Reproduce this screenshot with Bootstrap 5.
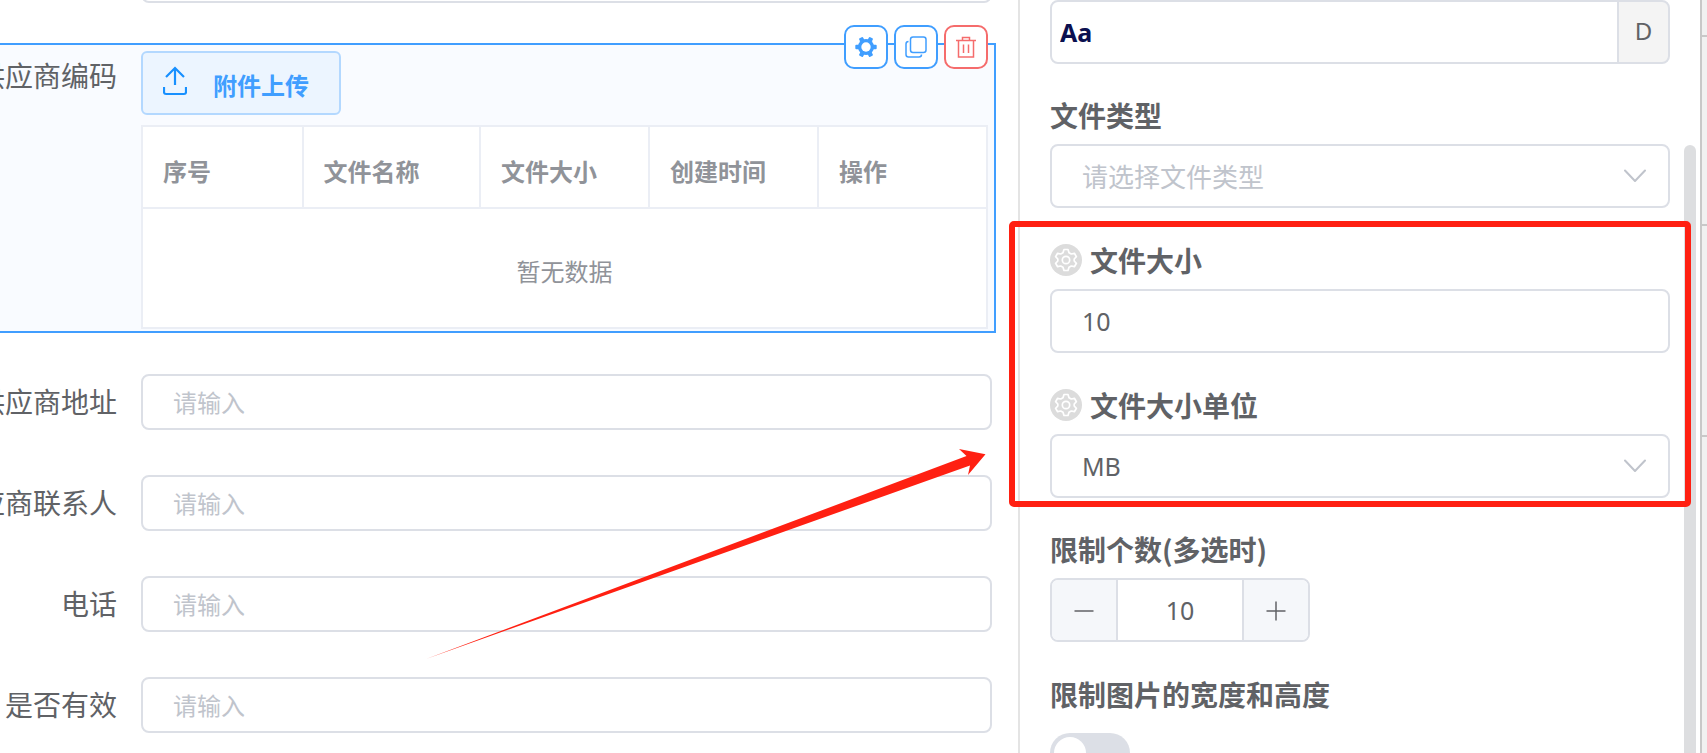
<!DOCTYPE html>
<html lang="zh-CN">
<head>
<meta charset="utf-8">
<meta name="viewport" content="width=device-width, initial-scale=1">
<title>表单设计器</title>
<link href="https://cdn.jsdelivr.net/npm/bootstrap@5.3.0/dist/css/bootstrap.min.css" rel="stylesheet">
<style>
  :root { --line: #dcdfe6; --ink: #606266; --hint: #c0c4cc; --blue: #409eff; --red: #f56c6c; --mark-red: #ff2012; }
  body { font-family: "Noto Sans CJK SC", sans-serif; color: var(--ink); background: #fff; }

  /* form canvas */
  .canvas { min-width: 0; padding-right: 22px; }
  .form-rows { margin-top: -53px; }
  .form-line { padding-right: 4px; margin-bottom: 45px; }
  .form-line.before-selected { margin-bottom: 40px; }
  .form-line.selected { margin-bottom: 41px; padding: 6px 6px 2px 0; border: 2px solid var(--blue); border-left: 0; background: #f9fbff; }
  .line-label { flex: 0 0 117px; min-width: 0; margin-right: 24px; height: 56px; padding-bottom: 2px; font-size: 28px; white-space: nowrap; }
  .selected .line-label { height: 50px; }
  .box { height: 64px; padding: 0 30px; border: 2px solid var(--line); border-radius: 8px; color: var(--ink); background-color: #fff; font-size: 25px; font-family: "Noto Sans", "Noto Sans CJK SC", sans-serif; }
  .line-box { height: 56px; padding-bottom: 2px; font-size: 24px; font-family: "Noto Sans CJK SC", sans-serif; }
  .box::placeholder { color: var(--hint); }

  .upload-btn { height: 64px; padding: 0 30px 0 20px; gap: 26px; border: 2px solid #b3d8ff; border-radius: 6px; background: #ecf5ff; color: var(--blue); font-size: 24px; font-weight: 700; margin-bottom: 10px; }
  .upload-btn svg { box-sizing: content-box; padding-bottom: 4px; }
  .file-table { --bs-table-bg: #fff; border-color: #ebeef5; table-layout: fixed; font-size: 24px; }
  .file-table > :not(caption) > * > * { border: 2px solid #ebeef5; color: #909399; vertical-align: middle; padding: 8px 20px 0; }
  .file-table thead tr { height: 82px; }
  .file-table tbody tr { height: 120px; }
  .file-table > tbody > tr > td { padding-top: 6px; }

  .line-tools { top: -20px; right: 6px; gap: 6px; }
  .tool-btn { width: 44px; height: 44px; padding: 0; border: 2px solid var(--blue); border-radius: 10px; background: #fff; color: var(--blue); }
  .tool-btn.danger { border-color: var(--red); color: var(--red); }
  .arrow-mark { left: 420px; top: 440px; }

  /* property panel */
  .panel { flex: 0 0 682px; border-left: 2px solid #e4e4e4; padding: 0 4px 0 30px; gap: 14px; }
  .panel-fields { min-width: 0; }
  .prop { margin-bottom: 25px; }
  .prop-label { height: 56px; padding-bottom: 2px; font-size: 28px; font-weight: 700; gap: 8px; }
  .type-input { color: #0b1050; font-weight: 700; font-size: 25px; padding: 0 8px; }
  .type-suffix { width: 53px; border: 2px solid var(--line); border-radius: 0 8px 8px 0; margin-left: -2px; background: #f4f4f4; color: var(--ink); font-size: 24px; font-family: "Noto Sans", sans-serif; padding: 0 0 2px; }
  .pick { padding-top: 2px; background-image: url("data:image/svg+xml,%3Csvg xmlns='http://www.w3.org/2000/svg' viewBox='0 0 22 14'%3E%3Cpath d='M1 1.5 11 12 21 1.5' fill='none' stroke='%23c0c4cc' stroke-width='2' stroke-linecap='round' stroke-linejoin='round'/%3E%3C/svg%3E"); background-size: 22px 14px; background-position: right 22px center; }
  .pick.unset { padding-top: 0; padding-bottom: 2px; color: var(--hint); font-size: 26px; font-family: "Noto Sans CJK SC", sans-serif; }
  .stepper { width: 260px; height: 64px; border: 2px solid var(--line); border-radius: 8px; overflow: hidden; }
  .step-btn { flex: 0 0 64px; border: 0; background: #f5f7fa; color: var(--ink); padding: 0 0 2px; }
  .step-value { min-width: 0; border: 2px solid var(--line); border-width: 0 2px; border-radius: 0; text-align: center; color: var(--ink); font-size: 25px; font-family: "Noto Sans", sans-serif; padding: 2px 0 0; }
  .form-check-input.toggle { width: 80px; height: 40px; margin: 10px 0 0; border: 0; border-radius: 20px; background-color: var(--line); background-size: 32px 32px; background-position: left 4px center; background-repeat: no-repeat;
    background-image: url("data:image/svg+xml,%3Csvg xmlns='http://www.w3.org/2000/svg' viewBox='0 0 32 32'%3E%3Ccircle cx='16' cy='16' r='16' fill='%23fff'/%3E%3C/svg%3E"); }
  .highlight { top: -12px; bottom: -9px; left: -41px; right: -21px; border: 6px solid var(--mark-red); border-radius: 5px; z-index: 2; }
  .scroll-thumb { flex: 0 0 12px; margin-top: 145px; background: #dddee0; border-radius: 6px 6px 0 0; }

  .rail { flex: 0 0 7px; border-left: 2px solid #c8c8c8; background: #f1f1f1; }
  .rail-cell { border-bottom: 2px solid #c8c8c8; }
  .rail-cell.short { height: 37px; }
  .rail-cell.mid { height: 189px; }
  .rail-cell.tall { height: 211px; }
</style>
</head>
<body>
<div class="d-flex vh-100 overflow-hidden">

  <main class="canvas flex-grow-1 position-relative overflow-hidden">
    <form class="form-rows">
      <div class="form-line before-selected d-flex">
        <span class="line-label"></span>
        <input class="form-control box line-box" type="text" aria-label="供应商名称">
      </div>

      <div class="form-line selected d-flex position-relative">
        <div class="line-label d-flex justify-content-end align-items-center">供应商编码</div>
        <div class="flex-grow-1">
          <button class="upload-btn btn d-flex align-items-center" type="button">
            <svg width="24" height="30" viewBox="0 0 24 30" fill="none" stroke="#1890ff" stroke-width="2.2" aria-hidden="true"><path d="M12 19V2M3 11 12 2 21 11M1 21V26Q1 28 3 28H21Q23 28 23 26V21"/></svg>
            <span class="pt-1">附件上传</span>
          </button>
          <table class="file-table table mb-0">
            <colgroup><col style="width:19%"><col style="width:21%"><col style="width:20%"><col style="width:20%"><col style="width:20%"></colgroup>
            <thead><tr><th>序号</th><th>文件名称</th><th>文件大小</th><th>创建时间</th><th>操作</th></tr></thead>
            <tbody><tr><td class="text-center" colspan="5">暂无数据</td></tr></tbody>
          </table>
        </div>
        <div class="line-tools position-absolute d-flex">
          <button class="tool-btn d-flex align-items-center justify-content-center" type="button" aria-label="设置">
            <svg width="22" height="22" viewBox="-11 -11 22 22" aria-hidden="true">
              <g fill="currentColor"><circle r="8"/><g id="tooth"><rect x="-10.7" y="-2.2" width="21.4" height="4.4" rx="1"/></g><use href="#tooth" transform="rotate(60)"/><use href="#tooth" transform="rotate(120)"/></g>
              <circle r="4.7" fill="#fff"/>
            </svg>
          </button>
          <button class="tool-btn d-flex align-items-center justify-content-center" type="button" aria-label="复制">
            <svg width="22" height="22" viewBox="0 0 22 22" fill="none" stroke="currentColor" stroke-width="1.5" aria-hidden="true"><rect x="5.5" y="1" width="15.5" height="15.5" rx="2.5"/><path d="M3.5 5.5Q1 5.5 1 8V18.5Q1 21 3.5 21H14Q16.500 21 16.500 18.500"/></svg>
          </button>
          <button class="tool-btn danger d-flex align-items-center justify-content-center" type="button" aria-label="删除">
            <svg width="22" height="22" viewBox="0 0 22 22" fill="none" stroke="currentColor" stroke-width="1.500" aria-hidden="true"><path d="M1 4.500H21M3.500 4.500V21H18.500V4.500M7.500 4.500V1.500H14.500V4.500M8.500 8.500V17M13.500 8.500V17"/></svg>
          </button>
        </div>
      </div>

      <div class="form-line d-flex">
        <label class="line-label d-flex justify-content-end align-items-center" for="address">供应商地址</label>
        <input class="form-control box line-box" id="address" type="text" placeholder="请输入">
      </div>
      <div class="form-line d-flex">
        <label class="line-label d-flex justify-content-end align-items-center" for="contact">供应商联系人</label>
        <input class="form-control box line-box" id="contact" type="text" placeholder="请输入">
      </div>
      <div class="form-line d-flex">
        <label class="line-label d-flex justify-content-end align-items-center" for="phone">电话</label>
        <input class="form-control box line-box" id="phone" type="text" placeholder="请输入">
      </div>
      <div class="form-line d-flex">
        <label class="line-label d-flex justify-content-end align-items-center" for="valid">是否有效</label>
        <input class="form-control box line-box" id="valid" type="text" placeholder="请输入">
      </div>
    </form>
    <svg class="arrow-mark position-absolute pe-none" width="580" height="230" viewBox="420 440 580 230" aria-hidden="true"><path fill="#ff2012" d="M426 659 966.500 456 959 449 985.500 454.200 968 475 970 465.500Z"/></svg>
  </main>

  <aside class="panel d-flex">
    <div class="panel-fields flex-grow-1">
      <div class="d-flex mb-4">
        <input class="form-control box type-input rounded-end-0" type="text" value="Aa" aria-label="默认值">
        <button class="type-suffix flex-shrink-0" type="button">D</button>
      </div>
      <div class="prop">
        <label class="prop-label d-flex align-items-center" for="fileType">文件类型</label>
        <select class="form-select box pick unset" id="fileType"><option>请选择文件类型</option></select>
      </div>

      <div class="position-relative">
        <div class="prop">
          <label class="prop-label d-flex align-items-center" for="fileSize">
            <svg width="32" height="32" viewBox="-16 -16 32 32" aria-hidden="true"><circle r="16" fill="#dcdcdc"/><g id="cog" fill="none" stroke="#fff" stroke-width="1.700" stroke-linejoin="round"><path d="M-2-10.500H2L3-7.300 5.300-6 8.400-6.700 10.400-3.300 8.200-1V1L10.400 3.300 8.400 6.700 5.300 6 3 7.300 2 10.500H-2L-3 7.300-5.300 6-8.400 6.700-10.400 3.300-8.200 1V-1L-10.400-3.300-8.400-6.700-5.300-6-3-7.300Z"/><circle r="3.700"/></g></svg>
            文件大小
          </label>
          <input class="form-control box" id="fileSize" type="text" value="10">
        </div>
        <div>
          <label class="prop-label d-flex align-items-center" for="fileUnit">
            <svg width="32" height="32" viewBox="-16 -16 32 32" aria-hidden="true"><circle r="16" fill="#dcdcdc"/><use href="#cog"/></svg>
            文件大小单位
          </label>
          <select class="form-select box pick" id="fileUnit"><option>MB</option></select>
        </div>
        <div class="highlight position-absolute pe-none"></div>
      </div>

      <div class="prop pt-4">
        <label class="prop-label d-flex align-items-center" for="limit">限制个数(多选时)</label>
        <div class="stepper d-flex">
          <button class="step-btn" type="button" aria-label="减少"><svg width="20" height="20" viewBox="0 0 20 20" stroke="currentColor" stroke-width="1.500" aria-hidden="true"><path d="M.5 10H19.500"/></svg></button>
          <input class="step-value flex-grow-1" id="limit" type="text" value="10">
          <button class="step-btn" type="button" aria-label="增加"><svg width="20" height="20" viewBox="0 0 20 20" stroke="currentColor" stroke-width="1.500" aria-hidden="true"><path d="M.5 10H19.500M10 .5V19.500"/></svg></button>
        </div>
      </div>
      <div>
        <label class="prop-label d-flex align-items-center" for="limitSize">限制图片的宽度和高度</label>
        <input class="form-check-input toggle d-block" id="limitSize" type="checkbox" role="switch">
      </div>
    </div>
    <div class="scroll-thumb"></div>
  </aside>

  <div class="rail">
    <div class="rail-cell short"></div>
    <div class="rail-cell mid"></div>
    <div class="rail-cell tall"></div>
  </div>
</div>
<script src="https://cdn.jsdelivr.net/npm/bootstrap@5.3.0/dist/js/bootstrap.bundle.min.js"></script>
</body>
</html>
